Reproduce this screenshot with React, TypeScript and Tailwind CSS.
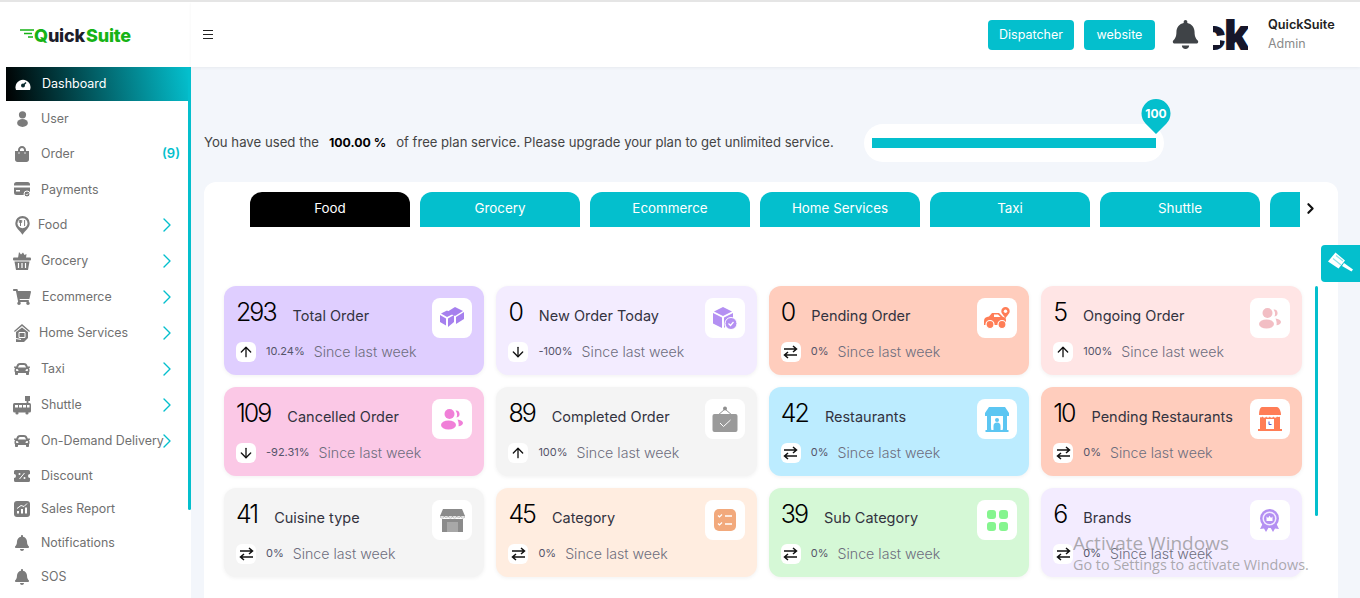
import { ArrowDown, ArrowUp, ChevronRight } from "lucide-react";
import { FaBell, FaCar, FaShoppingBag, FaShoppingCart } from "react-icons/fa";
import type { ReactNode } from "react";

function Gauge() {
  return (
    <svg width="16" height="14" viewBox="0 0 16 14">
      <path d="M1 13a7.5 7.5 0 1 1 14 0z" fill="#fff" />
      <circle cx="8" cy="8.5" r="2" fill="#0a2b2e" />
      <path d="M8 8.5l3-3" stroke="#0a2b2e" strokeWidth="1.4" />
    </svg>
  );
}

function UserIcon() {
  return (
    <svg width="11" height="16" viewBox="0 0 11 16" fill="#7b7b7b">
      <circle cx="5.5" cy="3.8" r="3.6" />
      <ellipse cx="5.5" cy="12" rx="5.4" ry="3.9" />
    </svg>
  );
}

function CardCheck() {
  return (
    <svg width="16" height="15" viewBox="0 0 16 15">
      <rect x="0" y="0" width="16" height="13" rx="2.5" fill="#7b7b7b" />
      <rect x="0" y="3.5" width="16" height="2" fill="#fff" />
      <rect x="2" y="8" width="4" height="1.5" fill="#fff" />
      <circle cx="13" cy="12" r="3" fill="#7b7b7b" stroke="#fff" strokeWidth="1" />
      <path d="M11.8 12l1 1 1.500-1.700" stroke="#fff" strokeWidth="0.8" fill="none" />
    </svg>
  );
}

function FoodPin() {
  return (
    <svg width="15" height="19" viewBox="0 0 15 19">
      <path d="M7.5 0a7.2 7.2 0 0 0-7.2 7.2c0 4.6 4.6 7.3 7.2 11.6 2.6-4.3 7.2-7 7.2-11.6A7.2 7.2 0 0 0 7.5 0z" fill="#7b7b7b" />
      <circle cx="7.5" cy="7.2" r="5" fill="#fff" />
      <path d="M5.5 4v6M4.3 4v2.4h2.4V4M9.6 4v6" stroke="#7b7b7b" strokeWidth="1" fill="none" />
    </svg>
  );
}

function Basket() {
  return (
    <svg width="18" height="18" viewBox="0 0 18 18" fill="#7b7b7b">
      <path d="M6 0l2 2.500L10 .5l1.500 2.500 2-1-.5 4h-8z" />
      <rect x="0" y="5.500" width="18" height="3" rx="1" />
      <path d="M1.500 9.500h15L15 18H3z" />
      <path d="M5.500 11v5M9 11v5M12.500 11v5" stroke="#fff" strokeWidth="1.200" />
    </svg>
  );
}

function House() {
  return (
    <svg width="16" height="18" viewBox="0 0 16 18" fill="#7b7b7b">
      <path d="M8 0L16 7l-.8 1L8 2 .8 8 0 7z" />
      <path d="M2 8l6-4.500L14 8v6l-4 4H2z" />
      <path d="M5 8.500h6v5H5zM2 14.500l5 1" stroke="#fff" strokeWidth="1" fill="none" />
    </svg>
  );
}

function Shuttle() {
  return (
    <svg width="18" height="19" viewBox="0 0 18 19">
      <path d="M12 0h5v5h-1.600v2h-1.800V5H12z" fill="#7b7b7b" />
      <rect x="0" y="7" width="18" height="9.500" rx="1.500" fill="#7b7b7b" />
      <path d="M2 9h3v2.600H2zM6 9h3v2.600H6zM10 9h3v2.600h-3zM14 9h2.500v2.600H14z" fill="#fff" />
      <circle cx="4" cy="17" r="1.600" fill="#7b7b7b" />
      <circle cx="14" cy="17" r="1.600" fill="#7b7b7b" />
    </svg>
  );
}

function Ticket() {
  return (
    <svg width="16" height="12" viewBox="0 0 16 12">
      <path d="M1.500 0h13A1.500 1.500 0 0 1 16 1.500V4a2 2 0 0 0 0 4v2.500a1.500 1.500 0 0 1-1.500 1.500h-13A1.500 1.500 0 0 1 0 10.500V8a2 2 0 0 0 0-4V1.500A1.500 1.500 0 0 1 1.500 0z" fill="#7b7b7b" />
      <path d="M5.500 9l5-6" stroke="#fff" strokeWidth="1" />
      <circle cx="5.500" cy="4" r="1" fill="#fff" />
      <circle cx="10.500" cy="8" r="1" fill="#fff" />
    </svg>
  );
}

function SalesChart() {
  return (
    <svg width="16" height="16" viewBox="0 0 16 16">
      <rect width="16" height="16" rx="3" fill="#7b7b7b" />
      <path d="M3 12.500h2V10H3zM7 12.500h2V8H7zM11 12.500h2V6.500h-2z" fill="#fff" />
      <path d="M3 7.500l4-3 3 1 3-3" stroke="#fff" strokeWidth="1" fill="none" />
    </svg>
  );
}

function Brush() {
  return (
    <svg width="28" height="24" viewBox="0 0 28 24">
      <path d="M8.500 0.500L18 8.500l-6.500 8L1 9.500z" fill="#fff" />
      <path d="M6 6.500l8 6.500M9 3.500l7 5.500" stroke="#8fe3ea" strokeWidth="1.200" />
      <path d="M17 11l9 6.500-1.500 2L15 14z" fill="#fff" />
    </svg>
  );
}

function Swap() {
  return (
    <svg width="15" height="14" viewBox="0 0 15 14" fill="none" stroke="#111" strokeWidth="1.500">
      <path d="M1 4h12.500M10 1l3.500 3-3.500 3M14 10H1.500M5 7l-3.500 3L5 13" />
    </svg>
  );
}

function Boxes() {
  return (
    <svg width="24" height="22" viewBox="0 0 24 22">
      <path d="M7 5l8-5 8 4-8 5z" fill="#a680ee" />
      <path d="M16 10l8-5v7l-8 5z" fill="#a680ee" />
      <path d="M0 8l6 3.500v7L0 15z" fill="#a680ee" />
      <path d="M1 6.500l6-3 6 3.500-6 3z" fill="#a680ee" />
      <path d="M8 11.500l6-3.500v7l-6 5z" fill="#a680ee" />
    </svg>
  );
}

function BoxCheck() {
  return (
    <svg width="24" height="24" viewBox="0 0 24 24">
      <path d="M10 1l9 4.500-9 4.500-9-4.500z" fill="#b490f2" />
      <path d="M0 7l9 4.500V22l-9-4.500z" fill="#b490f2" />
      <path d="M11 11.500L20 7v5a7 7 0 0 0-8 9l-1 1z" fill="#b490f2" />
      <circle cx="18" cy="17.500" r="6" fill="#b490f2" stroke="#fff" strokeWidth="1" />
      <path d="M15.500 17.500l2 2 3-3.500" stroke="#fff" strokeWidth="1.200" fill="none" />
    </svg>
  );
}

function CarPin() {
  return (
    <svg width="26" height="23" viewBox="0 0 26 23">
      <path d="M0 14c0-3 2-4 5-4.500L8 6h7l4 4c2 0 3 1 3 3v5H0z" fill="#ff7d56" />
      <path d="M10 7.500h4l2.500 2.500H10z" fill="#fff" />
      <circle cx="6" cy="17.500" r="4" fill="#ff7d56" stroke="#fff" strokeWidth="1.200" />
      <circle cx="18" cy="17.500" r="4" fill="#ff7d56" stroke="#fff" strokeWidth="1.200" />
      <path d="M21.500 0a4.200 4.200 0 0 0-4.200 4.200c0 2.500 2.600 4 4.200 7 1.600-3 4.200-4.500 4.200-7A4.200 4.200 0 0 0 21.500 0z" fill="#ff7d56" />
      <circle cx="21.500" cy="4.200" r="1.700" fill="#fff" />
    </svg>
  );
}

function People({ color }: { color: string }) {
  return (
    <svg width="22" height="21" viewBox="0 0 22 21" fill={color}>
      <circle cx="8.500" cy="5" r="5" />
      <ellipse cx="7.500" cy="16" rx="7.500" ry="4.500" />
      <path d="M14.500 1.500a3.500 3.500 0 1 1 1 7 7 7 0 0 0-1-7z" />
      <path d="M16.500 10.500c3 .3 5.500 1.700 5.500 3.500s-2.300 3-4.500 3.300c.5-2.500-.2-5-1-6.800z" />
    </svg>
  );
}

function Shop() {
  return (
    <svg width="25" height="23" viewBox="0 0 25 23">
      <path d="M3 0h19l3 7H0z" fill="#8b8b8b" />
      <path d="M0 7a2.100 2.100 0 0 0 4.200 0 2.100 2.100 0 0 0 4.100 0 2.100 2.100 0 0 0 4.200 0 2.100 2.100 0 0 0 4.200 0 2.100 2.100 0 0 0 4.100 0 2.100 2.100 0 0 0 4.200 0z" fill="#fff" stroke="#8b8b8b" strokeWidth="0.500" />
      <path d="M2 10h21v13H2z" fill="#8b8b8b" />
      <rect x="7" y="13" width="11" height="10" fill="#a8a8a8" />
    </svg>
  );
}

function HangSign() {
  return (
    <svg width="26" height="26" viewBox="0 0 26 26">
      <circle cx="13" cy="2.500" r="2" fill="#8f8f8f" />
      <path d="M13 3L5 10M13 3l8 7" stroke="#8f8f8f" strokeWidth="1" fill="none" />
      <rect x="0.500" y="8" width="25" height="18" rx="2" fill="#9a9a9a" />
      <path d="M8 17l3.500 3.500 7-6.500" stroke="#fff" strokeWidth="1" fill="none" />
    </svg>
  );
}

function Storefront() {
  return (
    <svg width="24" height="25" viewBox="0 0 24 25">
      <path d="M4 0h16l4 6v3H0V6z" fill="#5cc6f2" />
      <path d="M2 9h20v14H2z" fill="#5cc6f2" />
      <path d="M6 9h12v12a6 6 0 0 1 -12 0z" fill="#fff" />
      <circle cx="12" cy="13" r="2" fill="#5cc6f2" />
      <path d="M8.500 23v-4a3.500 3.500 0 0 1 7 0v4z" fill="#5cc6f2" />
      <rect x="0.500" y="23" width="23" height="2" fill="#5cc6f2" />
    </svg>
  );
}

function ClockShop() {
  return (
    <svg width="24" height="24" viewBox="0 0 24 24">
      <path d="M4 0h15c2 0 4 4 4 8H1c0-4 1-8 3-8z" fill="#ff7d56" />
      <path d="M2 9.500h20V22H2z" fill="#ff7d56" />
      <path d="M1 8a1.800 1.800 0 0 0 3.600 1 1.800 1.800 0 0 0 3.600 0 1.800 1.800 0 0 0 3.600 0 1.800 1.800 0 0 0 3.600 0 1.800 1.800 0 0 0 3.600 0 1.800 1.800 0 0 0 3.400-1z" fill="#fff" />
      <rect x="8" y="12" width="8" height="10" fill="#fff" />
      <path d="M11 14.500v3h2.500" stroke="#4a5ad0" strokeWidth="1" fill="none" />
      <rect x="0" y="22" width="24" height="2" fill="#ff7d56" />
    </svg>
  );
}

function Checklist() {
  return (
    <svg width="22" height="22" viewBox="0 0 22 22">
      <rect width="22" height="22" rx="5" fill="#f2a97c" />
      <path d="M4 6.500l1.500 1.500L8 5.500M4 14.500l1.500 1.500L8 13.500" stroke="#fff" strokeWidth="1.200" fill="none" />
      <path d="M11 7h7M11 15h7" stroke="#fff" strokeWidth="1.400" />
    </svg>
  );
}

function Tiles() {
  return (
    <div className="grid grid-cols-2 gap-[3px] w-[21px] h-[21px]">
      <div className="rounded-[3px] bg-[#85f58f]" />
      <div className="rounded-[3px] bg-[#85f58f]" />
      <div className="rounded-[3px] bg-[#85f58f]" />
      <div className="rounded-[3px] bg-[#85f58f]" />
    </div>
  );
}

function Badge() {
  return (
    <svg width="19" height="23" viewBox="0 0 19 23">
      <path d="M3 14l-3 6 4-.500 2 3.500 3.500-6zM16 14l3 6-4-.500-2 3.500-3.500-6z" fill="#b490f2" />
      <circle cx="9.500" cy="9.500" r="9.500" fill="#b490f2" />
      <circle cx="9.500" cy="9.500" r="7" fill="#f3ecff" />
      <circle cx="9.500" cy="9.500" r="5.500" fill="#b490f2" />
      <path d="M6.500 12V7.500l1.600 1.500 1.400-2.200L11 9l1.500-1.500V12z" fill="#fff" />
    </svg>
  );
}

type NavItem = {
  label: string;
  icon: ReactNode;
  height: string;
  gap: string;
  arrow?: boolean;
};

const gray = "#7b7b7b";

const navItems: NavItem[] = [
  { label: "User", icon: <UserIcon />, height: "h-[35px]", gap: "ml-[10px]" },
  { label: "Order", icon: <FaShoppingBag size={16} color={gray} />, height: "h-[36px]", gap: "ml-[10px]" },
  { label: "Payments", icon: <CardCheck />, height: "h-[35px]", gap: "ml-[10px]" },
  { label: "Food", icon: <FoodPin />, height: "h-[36px]", gap: "ml-[7px]", arrow: true },
  { label: "Grocery", icon: <Basket />, height: "h-[36px]", gap: "ml-[10px]", arrow: true },
  { label: "Ecommerce", icon: <FaShoppingCart size={18} color={gray} />, height: "h-[36px]", gap: "ml-[11px]", arrow: true },
  { label: "Home Services", icon: <House />, height: "h-[36px]", gap: "ml-[8px]", arrow: true },
  { label: "Taxi", icon: <FaCar size={16} color={gray} />, height: "h-[36px]", gap: "ml-[10px]", arrow: true },
  { label: "Shuttle", icon: <Shuttle />, height: "h-[36px]", gap: "ml-[10px]", arrow: true },
  { label: "On-Demand Delivery", icon: <FaCar size={16} color={gray} />, height: "h-[36px]", gap: "ml-[10px]", arrow: true },
  { label: "Discount", icon: <Ticket />, height: "h-[33px]", gap: "ml-[10px]" },
  { label: "Sales Report", icon: <SalesChart />, height: "h-[34px]", gap: "ml-[10px]" },
  { label: "Notifications", icon: <FaBell size={16} color={gray} />, height: "h-[34px]", gap: "ml-[10px]" },
  { label: "SOS", icon: <FaBell size={16} color={gray} />, height: "h-[34px]", gap: "ml-[10px]" },
];

const tabs = ["Grocery", "Ecommerce", "Home Services", "Taxi", "Shuttle"];

type Stat = {
  value: string;
  title: string;
  percent: string;
  trend: "up" | "down" | "same";
  bg: string;
  icon: ReactNode;
};

const stats: Stat[] = [
  { value: "293", title: "Total Order", percent: "10.24%", trend: "up", bg: "bg-[#dfceff]", icon: <Boxes /> },
  { value: "0", title: "New Order Today", percent: "-100%", trend: "down", bg: "bg-[#f3ecff]", icon: <BoxCheck /> },
  { value: "0", title: "Pending Order", percent: "0%", trend: "same", bg: "bg-[#ffcdbd]", icon: <CarPin /> },
  { value: "5", title: "Ongoing Order", percent: "100%", trend: "up", bg: "bg-[#ffe5e5]", icon: <People color="#f2bec4" /> },
  { value: "109", title: "Cancelled Order", percent: "-92.31%", trend: "down", bg: "bg-[#fbc8e6]", icon: <People color="#f07fd8" /> },
  { value: "89", title: "Completed Order", percent: "100%", trend: "up", bg: "bg-[#f4f4f4]", icon: <HangSign /> },
  { value: "42", title: "Restaurants", percent: "0%", trend: "same", bg: "bg-[#bcecff]", icon: <Storefront /> },
  { value: "10", title: "Pending Restaurants", percent: "0%", trend: "same", bg: "bg-[#ffcdbd]", icon: <ClockShop /> },
  { value: "41", title: "Cuisine type", percent: "0%", trend: "same", bg: "bg-[#f4f4f4]", icon: <Shop /> },
  { value: "45", title: "Category", percent: "0%", trend: "same", bg: "bg-[#ffede0]", icon: <Checklist /> },
  { value: "39", title: "Sub Category", percent: "0%", trend: "same", bg: "bg-[#d5f8d6]", icon: <Tiles /> },
  { value: "6", title: "Brands", percent: "0%", trend: "same", bg: "bg-[#f3ecff]", icon: <Badge /> },
];

function StatCard({ stat }: { stat: Stat }) {
  return (
    <div className={`h-[89px] rounded-[12px] px-3 pt-3 shadow-[0_1px_4px_rgba(0,0,0,0.06)] ${stat.bg}`}>
      <div className="flex items-start justify-between h-[40px]">
        <div className="flex items-center h-[28px]">
          <span className="text-[25px] font-light text-black leading-none tracking-[-2px] mt-[1px]">{stat.value}</span>
          <span className="ml-[17px] text-[14.5px] text-[#33333f] mt-[7px]">{stat.title}</span>
        </div>
        <div className="w-[40px] h-[40px] rounded-[8px] bg-white flex items-center justify-center">
          {stat.icon}
        </div>
      </div>
      <div className="flex items-center mt-[4px] h-[20px]">
        <div className="w-[20px] h-[20px] rounded-[6px] bg-white flex items-center justify-center">
          {stat.trend === "up" && <ArrowUp size={16} color="#111" strokeWidth={2} />}
          {stat.trend === "down" && <ArrowDown size={16} color="#111" strokeWidth={2} />}
          {stat.trend === "same" && <Swap />}
        </div>
        <span className="ml-[10px] text-[11px] text-[#55556a] -mt-[2px]">{stat.percent}</span>
        <span className="ml-[9px] text-[14.2px] font-light text-[#6d6d7d]">Since last week</span>
      </div>
    </div>
  );
}

export default function App() {
  return (
    <div className="h-[598px] overflow-hidden bg-[#f3f6fb] border-t-2 border-[#e5e5e5] font-['Inter',sans-serif] flex">
      {/* Sidebar */}
      <aside className="w-[191px] shrink-0 bg-white">
        <div className="h-[65px] flex items-center pl-[20px] pt-[2px]">
          <svg width="14" height="10" viewBox="0 0 14 10" className="-mt-[4px]">
            <path d="M0 1h14M4 4.500h8M8 8h5" stroke="#16b316" strokeWidth="1.400" />
          </svg>
          <span className="text-[18px] font-extrabold tracking-[-0.2px] text-[#16b316]">Q</span>
          <span className="text-[18px] font-extrabold tracking-[-0.2px] text-[#1d1d2b]">uick</span>
          <span className="text-[18px] font-extrabold tracking-[-0.2px] text-[#16b316] ml-[1px]">Suite</span>
        </div>
        <nav className="relative pl-[6px]">
          <div className="absolute right-0 top-0 w-[3px] h-[443px] rounded-b-sm bg-[#04bfcd]" />
          <div className="w-[182px] h-[34px] flex items-center pl-[9px] bg-linear-80/srgb from-black to-[#04bfcd]">
            <Gauge />
            <span className="ml-[11px] text-[12.5px] text-white">Dashboard</span>
          </div>
          {navItems.map((item) => (
            <div key={item.label} className={`relative w-[182px] flex items-center pl-[7px] ${item.height}`}>
              <div className="w-[18px] flex justify-center shrink-0">{item.icon}</div>
              <span className={`text-[12.4px] text-[#707070] whitespace-nowrap mt-[1px] ${item.gap}`}>{item.label}</span>
              {item.arrow && (
                <ChevronRight size={24} color="#04bfcd" strokeWidth={1.4} className="absolute left-[149px]" />
              )}
              {item.label === "Order" && (
                <span className="absolute right-[8px] text-[13px] font-semibold text-[#04bfcd]">(9)</span>
              )}
            </div>
          ))}
        </nav>
      </aside>

      <div className="flex-1 min-w-0 relative">
        {/* Header */}
        <header className="h-[65px] bg-white shadow-[0_1px_3px_rgba(0,0,0,0.05)] flex items-center pl-[12px] pr-[26px]">
          <div className="w-[10px] flex flex-col gap-[2.5px]">
            <div className="h-[1.5px] bg-[#222]" />
            <div className="h-[1.5px] bg-[#222]" />
            <div className="h-[1.5px] bg-[#222]" />
          </div>
          <div className="ml-auto flex items-center">
            <button className="w-[86px] h-[30px] pt-[1px] rounded-[4px] bg-[#04bfcd] text-white text-[12.5px]">Dispatcher</button>
            <button className="ml-[10px] w-[71px] h-[30px] pt-[1px] rounded-[4px] bg-[#04bfcd] text-white text-[12.5px]">website</button>
            <FaBell size={29} color="#3f4347" className="ml-[16px]" />
            <div className="relative ml-[13px] w-[35px] h-[34px] overflow-hidden flex items-center justify-end">
              <span className="text-[43px] font-black leading-none text-[#16162a] whitespace-nowrap tracking-[-2px]">ck</span>
              <div className="absolute left-0 top-[20px] w-[7px] h-[7px] bg-white" />
            </div>
            <div className="ml-[20px] w-[66px]">
              <div className="text-[12.7px] font-semibold text-[#222] leading-[18px] whitespace-nowrap">QuickSuite</div>
              <div className="text-[12.5px] text-[#8a8a8a] leading-[18px] mt-[1px]">Admin</div>
            </div>
          </div>
        </header>

        {/* Plan usage */}
        <div className="flex items-center pl-[13px] mt-[56px] h-[40px] text-[#444]">
          <span className="text-[13.2px] whitespace-pre">You have used the</span>
          <span className="ml-[10px] text-[12.3px] font-bold text-black">100.00 %</span>
          <span className="ml-[10px] text-[13.1px] whitespace-pre">of free plan service. Please upgrade your plan to get unlimited service.</span>
          <div className="absolute left-[673px] top-[122px] w-[300px] h-[38px] rounded-full bg-white flex items-center px-[8px]">
            <div className="w-full h-[10px] bg-[#04bfcd]" />
            <div className="absolute right-[-7px] -top-[25px]">
              <svg width="30" height="35" viewBox="0 0 30 35">
                <path d="M15 35L4.500 24.500a14.500 14.500 0 1 1 21 0z" fill="#04bfcd" />
              </svg>
              <span className="absolute inset-x-0 top-[6px] text-center text-[12px] font-bold text-white">100</span>
            </div>
          </div>
        </div>

        {/* Panel */}
        <section className="relative ml-[13px] mr-[22px] mt-[19px] h-[500px] rounded-[12px] bg-white pl-[20px]">
          <div className="flex gap-[10px] pl-[26px] pt-[10px] w-[1076px] overflow-hidden">
            <div className="w-[160px] h-[35px] shrink-0 rounded-t-[12px] bg-black text-white text-[13.4px] pb-[3px] flex items-center justify-center">Food</div>
            {tabs.map((tab) => (
              <div key={tab} className="w-[160px] h-[35px] shrink-0 rounded-t-[12px] bg-[#04bfcd] text-white text-[13.4px] pb-[3px] flex items-center justify-center">
                {tab}
              </div>
            ))}
            <div className="w-[160px] h-[35px] shrink-0 rounded-t-[12px] bg-[#04bfcd]" />
          </div>
          <ChevronRight size={17} color="#111" strokeWidth={3} className="absolute left-[1098px] top-[18px]" />

          <div className="absolute left-[1111px] top-[104px] w-[3px] h-[230px] rounded-full bg-[#04bfcd]" />

          <div className="grid grid-cols-4 gap-x-[12px] gap-y-[12px] w-[1077.6px] mt-[59px]">
            {stats.map((stat) => (
              <StatCard key={stat.title} stat={stat} />
            ))}
          </div>
        </section>

        {/* Theme button */}
        <div className="absolute right-0 top-[243px] w-[39px] h-[37px] rounded-l-[4px] bg-[#04bfcd] flex items-center justify-center">
          <Brush />
        </div>

        {/* Activation watermark */}
        <div className="absolute left-[882px] top-[529px] text-[#8a8a8a]/70 font-['Open_Sans',sans-serif] pointer-events-none whitespace-nowrap">
          <div className="text-[19px] leading-[24px]">Activate Windows</div>
          <div className="text-[14.4px] leading-[19px]">Go to Settings to activate Windows.</div>
        </div>
      </div>
    </div>
  );
}
